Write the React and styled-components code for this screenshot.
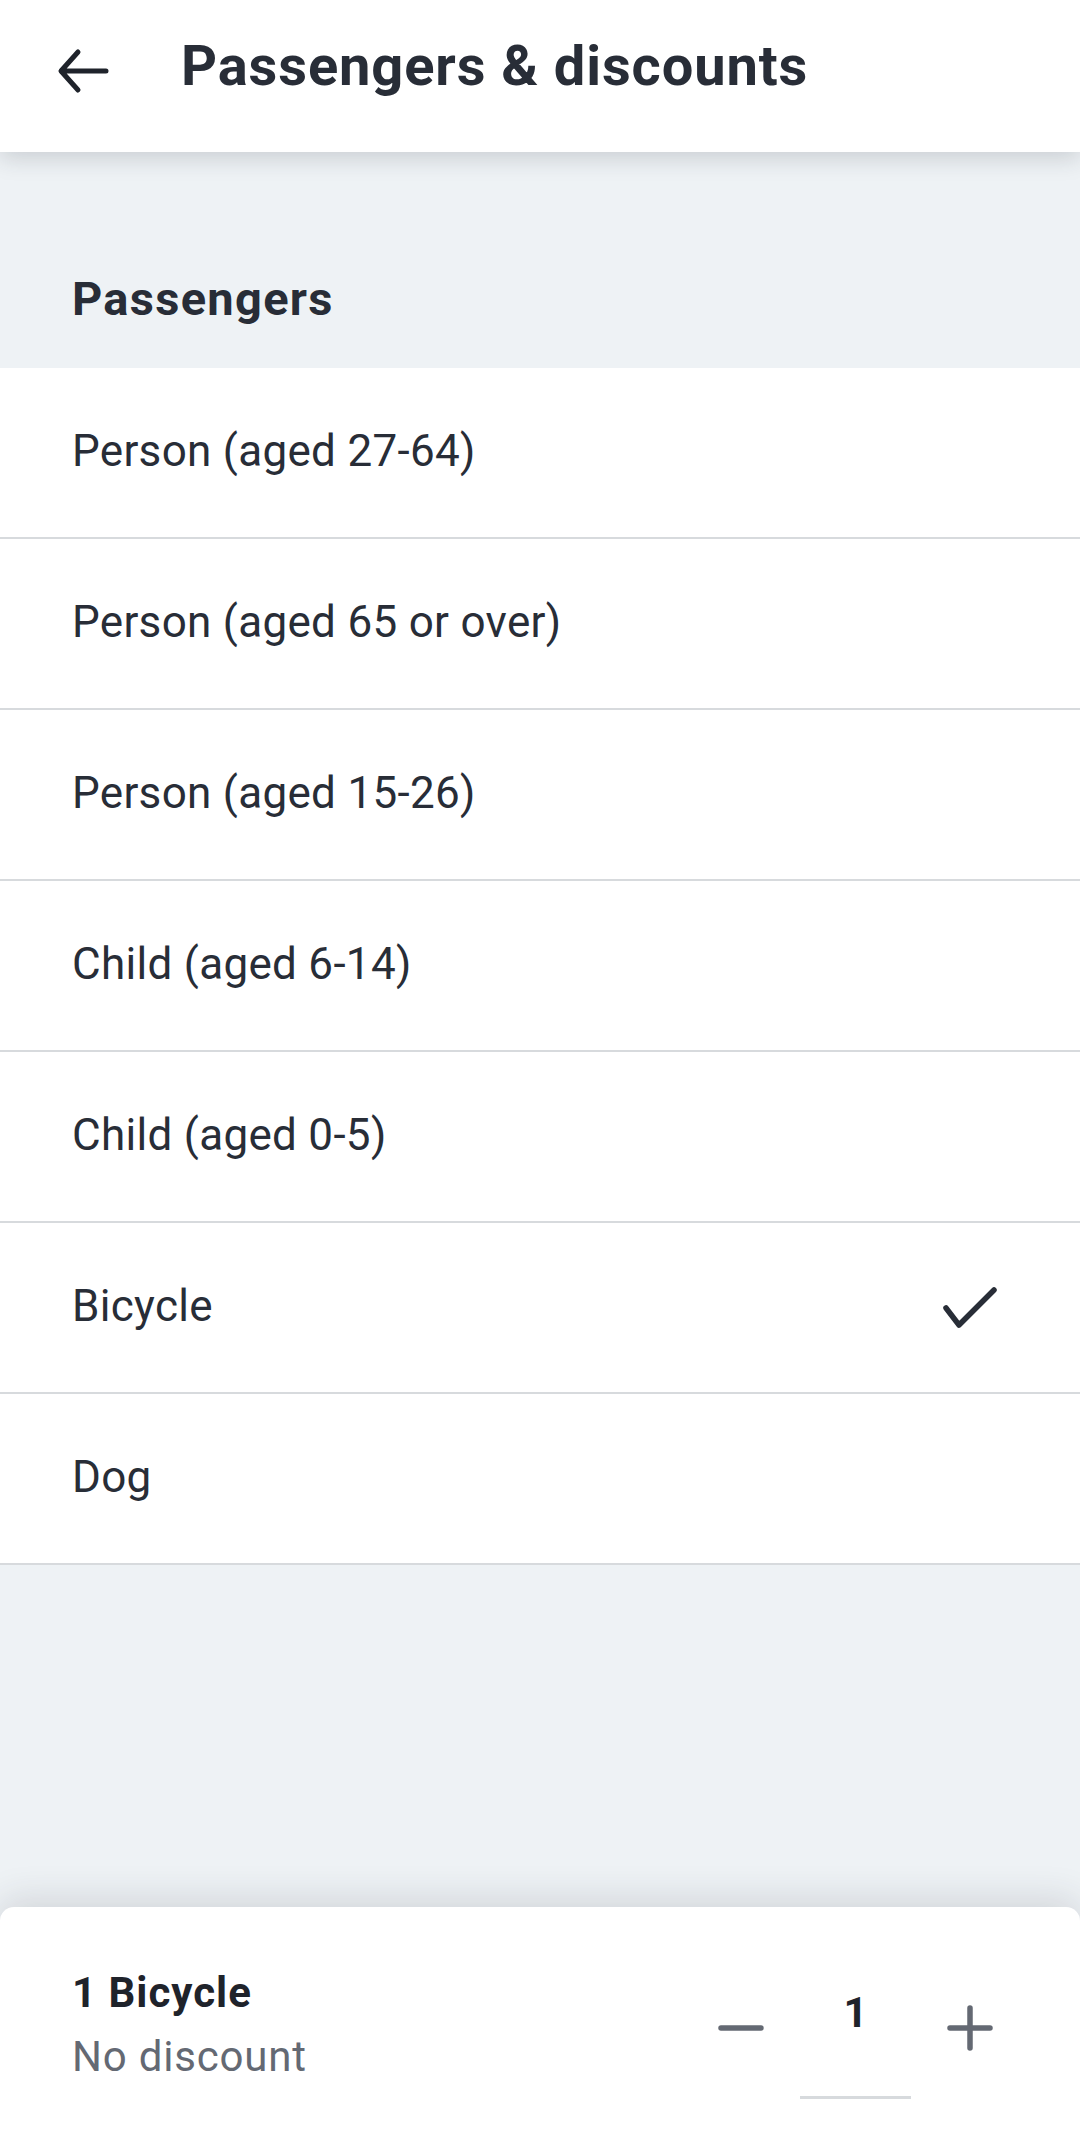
import React from 'react'
import styled, { createGlobalStyle } from 'styled-components'

const GlobalStyle = createGlobalStyle`
  html, body {
    margin: 0;
    padding: 0;
    background: #eef2f5;
  }
  body {
    font-family: Roboto, "Noto Sans", "DejaVu Sans", sans-serif;
    color: #282d37;
  }
  * {
    box-sizing: border-box;
  }
`

const PASSENGERS = [
  {id: 'adult', label: 'Person (aged 27-64)'},
  {id: 'senior', label: 'Person (aged 65 or over)'},
  {id: 'youth', label: 'Person (aged 15-26)'},
  {id: 'child', label: 'Child (aged 6-14)'},
  {id: 'infant', label: 'Child (aged 0-5)'},
  {id: 'bicycle', label: 'Bicycle', selected: true},
  {id: 'dog', label: 'Dog'},
]

const BackArrow = () => (
  <svg width="54" height="46" viewBox="0 0 54 46" fill="none">
    <path
      d="M50 23 H6 M22 4 L5 23 L22 42"
      stroke="#1f232b"
      strokeWidth="5"
      strokeLinecap="round"
      strokeLinejoin="round"
    />
  </svg>
)

const CheckIcon = () => (
  <svg width="56" height="44" viewBox="0 0 56 44" fill="none">
    <path
      d="M4 22 L17 39 L52 4"
      stroke="#282d37"
      strokeWidth="5.5"
      strokeLinecap="round"
      strokeLinejoin="round"
    />
  </svg>
)

const MinusIcon = () => (
  <svg width="46" height="46" viewBox="0 0 46 46" fill="none">
    <path d="M3 23 H43" stroke="#646973" strokeWidth="5.5" strokeLinecap="round" />
  </svg>
)

const PlusIcon = () => (
  <svg width="46" height="46" viewBox="0 0 46 46" fill="none">
    <path d="M3 23 H43 M23 3 V43" stroke="#646973" strokeWidth="5.5" strokeLinecap="round" />
  </svg>
)

export default function App() {
  return (
    <>
      <GlobalStyle />
      <StyledPage>
        <Header>
          <IconButton aria-label="Back">
            <BackArrow />
          </IconButton>
          <HeaderTitle>Passengers &amp; discounts</HeaderTitle>
        </Header>

        <SectionHead>
          <SectionTitle>Passengers</SectionTitle>
        </SectionHead>

        <List>
          {PASSENGERS.map(item => (
            <Row key={item.id}>
              <RowLabel>{item.label}</RowLabel>
              {item.selected && <CheckIcon />}
            </Row>
          ))}
        </List>

        <Spacer />

        <Sheet>
          <Summary>
            <SummaryTitle>1 Bicycle</SummaryTitle>
            <SummaryNote>No discount</SummaryNote>
          </Summary>
          <Stepper>
            <StepButton aria-label="Decrease">
              <MinusIcon />
            </StepButton>
            <ValueField>1</ValueField>
            <StepButton aria-label="Increase">
              <PlusIcon />
            </StepButton>
          </Stepper>
        </Sheet>
      </StyledPage>
    </>
  )
}

const StyledPage = styled.div`
  width: 1080px;
  min-height: 2146px;
  display: flex;
  flex-direction: column;
  background: #eef2f5;
`

const Header = styled.header`
  position: relative;
  z-index: 2;
  height: 152px;
  display: flex;
  align-items: center;
  padding: 0 0 0 56px;
  background: #fff;
  box-shadow: 0 6px 22px rgba(40, 45, 55, 0.18);
`

const IconButton = styled.button`
  display: flex;
  align-items: center;
  justify-content: center;
  padding: 0;
  margin: -10px 71px 0 0;
  border: 0;
  background: transparent;
`

const HeaderTitle = styled.h1`
  margin: -20px 0 0;
  font-size: 56px;
  font-weight: 700;
  line-height: 64px;
  letter-spacing: 0.9px;
  color: #282d37;
`

const SectionHead = styled.div`
  height: 216px;
  display: flex;
  align-items: flex-end;
  padding: 0 72px 42px;
`

const SectionTitle = styled.h2`
  margin: 0;
  font-size: 47px;
  font-weight: 700;
  line-height: 54px;
  letter-spacing: 1.3px;
  color: #282d37;
`

const List = styled.ul`
  margin: 0;
  padding: 0;
  list-style: none;
  background: #fff;
`

const Row = styled.li`
  height: 171px;
  display: flex;
  align-items: center;
  justify-content: space-between;
  padding: 0 82px 0 72px;
  border-bottom: 2px solid #d7dadd;
`

const RowLabel = styled.span`
  margin-top: -4px;
  font-size: 44px;
  font-weight: 400;
  line-height: 52px;
  letter-spacing: 0.3px;
  color: #282d37;
`

const Spacer = styled.div`
  flex: 1;
`

const Sheet = styled.footer`
  height: 239px;
  display: flex;
  justify-content: space-between;
  align-items: flex-start;
  padding: 58px 85px 0 72px;
  background: #fff;
  border-radius: 14px 14px 0 0;
  box-shadow: 0 -8px 36px rgba(40, 45, 55, 0.14);
`

const Summary = styled.div`
  display: flex;
  flex-direction: column;
`

const SummaryTitle = styled.strong`
  font-size: 42px;
  font-weight: 700;
  line-height: 56px;
  letter-spacing: 1px;
  color: #1f232b;
`

const SummaryNote = styled.span`
  margin-top: 6px;
  font-size: 42px;
  font-weight: 400;
  line-height: 60px;
  letter-spacing: 0.8px;
  color: #646973;
`

const Stepper = styled.div`
  display: flex;
  align-items: flex-start;
  gap: 4px;
`

const StepButton = styled.button`
  width: 50px;
  height: 50px;
  margin-top: 38px;
  display: flex;
  align-items: center;
  justify-content: center;
  padding: 0;
  border: 0;
  background: transparent;
`

const ValueField = styled.div`
  width: 111px;
  height: 134px;
  margin: 0 30px;
  padding-top: 24px;
  text-align: center;
  font-size: 42px;
  font-weight: 700;
  line-height: 48px;
  color: #1f232b;
  border-bottom: 3px solid #d7dadd;
`
